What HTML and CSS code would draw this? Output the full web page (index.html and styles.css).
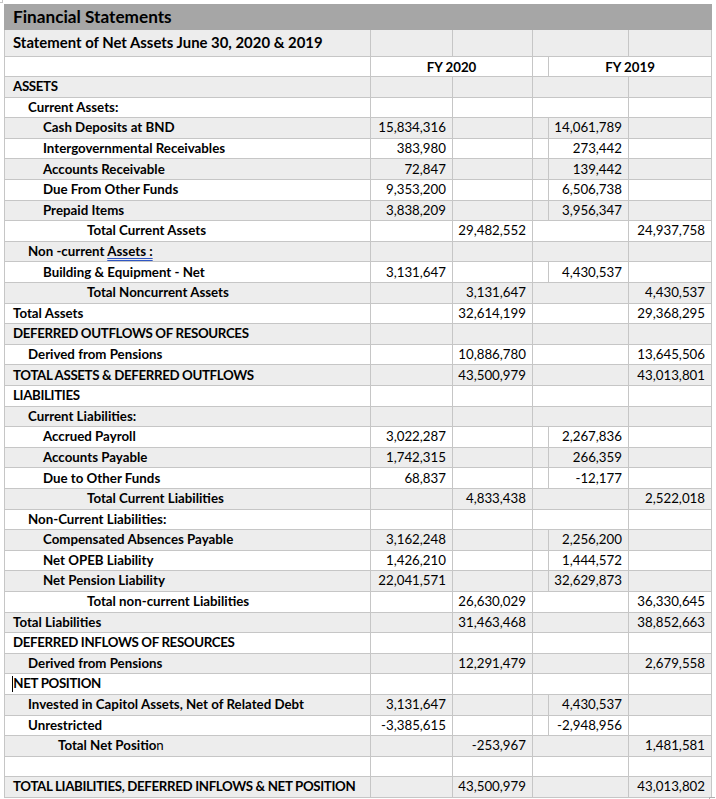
FILE: index.html
```html
<!DOCTYPE html>
<html lang="en">
<head>
<meta charset="utf-8">
<title>Financial Statements</title>
<link rel="stylesheet" href="styles.css">
</head>
<body>
<span class="mark mark-tl"></span>
<div class="sheet">
<table class="fs">
  <colgroup>
    <col class="c-lbl"><col class="c-a"><col class="c-b"><col class="c-gap"><col class="c-c"><col class="c-d">
  </colgroup>
  <tbody>
    <tr class="title"><td colspan="6">Financial Statements</td></tr>
    <tr class="sub"><td class="lbl l0">Statement of Net Assets June 30, 2020 &amp; 2019</td><td></td><td></td><td colspan="2"></td><td></td></tr>
    <tr class="r"><td></td><td colspan="2" class="fy">FY 2020</td><td></td><td colspan="2" class="fy">FY 2019</td></tr>
    <tr class="r"><td class="lbl l0 caps">ASSETS</td><td></td><td></td><td colspan="2"></td><td></td></tr>
    <tr class="r"><td class="lbl l1">Current Assets:</td><td></td><td></td><td colspan="2"></td><td></td></tr>
    <tr class="r"><td class="lbl l2">Cash Deposits at BND</td><td class="num">15,834,316</td><td></td><td></td><td class="num">14,061,789</td><td></td></tr>
    <tr class="r"><td class="lbl l2">Intergovernmental Receivables</td><td class="num">383,980</td><td></td><td></td><td class="num">273,442</td><td></td></tr>
    <tr class="r"><td class="lbl l2">Accounts Receivable</td><td class="num">72,847</td><td></td><td></td><td class="num">139,442</td><td></td></tr>
    <tr class="r"><td class="lbl l2">Due From Other Funds</td><td class="num">9,353,200</td><td></td><td></td><td class="num">6,506,738</td><td></td></tr>
    <tr class="r"><td class="lbl l2">Prepaid Items</td><td class="num">3,838,209</td><td></td><td></td><td class="num">3,956,347</td><td></td></tr>
    <tr class="r"><td class="lbl lt">Total Current Assets</td><td></td><td class="num">29,482,552</td><td colspan="2"></td><td class="num">24,937,758</td></tr>
    <tr class="r"><td class="lbl l1">Non -current <span class="gram">Assets :</span></td><td></td><td></td><td colspan="2"></td><td></td></tr>
    <tr class="r"><td class="lbl l2">Building &amp; Equipment - Net</td><td class="num">3,131,647</td><td></td><td></td><td class="num">4,430,537</td><td></td></tr>
    <tr class="r"><td class="lbl lt">Total Noncurrent Assets</td><td></td><td class="num">3,131,647</td><td colspan="2"></td><td class="num">4,430,537</td></tr>
    <tr class="r"><td class="lbl l0">Total Assets</td><td></td><td class="num">32,614,199</td><td colspan="2"></td><td class="num">29,368,295</td></tr>
    <tr class="r"><td class="lbl l0 caps">DEFERRED OUTFLOWS OF RESOURCES</td><td></td><td></td><td colspan="2"></td><td></td></tr>
    <tr class="r"><td class="lbl l1">Derived from Pensions</td><td></td><td class="num">10,886,780</td><td colspan="2"></td><td class="num">13,645,506</td></tr>
    <tr class="r"><td class="lbl l0 caps">TOTAL ASSETS &amp; DEFERRED OUTFLOWS</td><td></td><td class="num">43,500,979</td><td colspan="2"></td><td class="num">43,013,801</td></tr>
    <tr class="r"><td class="lbl l0 caps">LIABILITIES</td><td></td><td></td><td colspan="2"></td><td></td></tr>
    <tr class="r"><td class="lbl l1">Current Liabilities:</td><td></td><td></td><td colspan="2"></td><td></td></tr>
    <tr class="r"><td class="lbl l2">Accrued Payroll</td><td class="num">3,022,287</td><td></td><td></td><td class="num">2,267,836</td><td></td></tr>
    <tr class="r"><td class="lbl l2">Accounts Payable</td><td class="num">1,742,315</td><td></td><td></td><td class="num">266,359</td><td></td></tr>
    <tr class="r"><td class="lbl l2">Due to Other Funds</td><td class="num">68,837</td><td></td><td></td><td class="num">-12,177</td><td></td></tr>
    <tr class="r"><td class="lbl lt">Total Current Liabilities</td><td></td><td class="num">4,833,438</td><td colspan="2"></td><td class="num">2,522,018</td></tr>
    <tr class="r"><td class="lbl l1">Non-Current Liabilities:</td><td></td><td></td><td colspan="2"></td><td></td></tr>
    <tr class="r"><td class="lbl l2">Compensated Absences Payable</td><td class="num">3,162,248</td><td></td><td></td><td class="num">2,256,200</td><td></td></tr>
    <tr class="r"><td class="lbl l2">Net OPEB Liability</td><td class="num">1,426,210</td><td></td><td></td><td class="num">1,444,572</td><td></td></tr>
    <tr class="r"><td class="lbl l2">Net Pension Liability</td><td class="num">22,041,571</td><td></td><td></td><td class="num">32,629,873</td><td></td></tr>
    <tr class="r"><td class="lbl lt">Total non-current Liabilities</td><td></td><td class="num">26,630,029</td><td colspan="2"></td><td class="num">36,330,645</td></tr>
    <tr class="r"><td class="lbl l0">Total Liabilities</td><td></td><td class="num">31,463,468</td><td colspan="2"></td><td class="num">38,852,663</td></tr>
    <tr class="r"><td class="lbl l0 caps">DEFERRED INFLOWS OF RESOURCES</td><td></td><td></td><td colspan="2"></td><td></td></tr>
    <tr class="r"><td class="lbl l1">Derived from Pensions</td><td></td><td class="num">12,291,479</td><td colspan="2"></td><td class="num">2,679,558</td></tr>
    <tr class="r"><td class="lbl l0 caps"><span class="caret"></span>NET POSITION</td><td></td><td></td><td colspan="2"></td><td></td></tr>
    <tr class="r"><td class="lbl l1">Invested in Capitol Assets, Net of Related Debt</td><td class="num">3,131,647</td><td></td><td></td><td class="num">4,430,537</td><td></td></tr>
    <tr class="r"><td class="lbl l1">Unrestricted</td><td class="num">-3,385,615</td><td></td><td></td><td class="num">-2,948,956</td><td></td></tr>
    <tr class="r"><td class="lbl lnp">Total Net Positio<span class="thin">n</span></td><td></td><td class="num">-253,967</td><td colspan="2"></td><td class="num">1,481,581</td></tr>
    <tr class="r"><td></td><td></td><td></td><td colspan="2"></td><td></td></tr>
    <tr class="r"><td class="lbl l0 caps">TOTAL LIABILITIES, DEFERRED INFLOWS &amp; NET POSITION</td><td></td><td class="num">43,500,979</td><td colspan="2"></td><td class="num">43,013,802</td></tr>
  </tbody>
</table>
</div>
<span class="mark mark-br"></span>
</body>
</html>
```
FILE: styles.css
```css
html, body {
  margin: 0;
  padding: 0;
  background: #ffffff;
}
body {
  position: relative;
  width: 716px;
  height: 799px;
  overflow: hidden;
  font-family: Lato, "Open Sans", "Liberation Sans", sans-serif;
  color: #000;
}
.sheet {
  padding: 4px 0 0 4px;
}
.fs {
  border-collapse: collapse;
  table-layout: fixed;
  width: 707px;
  font-size: 13.3px;
  border: 1px solid #c6c6c6;
}
.c-lbl { width: 366px; }
.c-a { width: 82px; }
.c-b { width: 80px; }
.c-gap { width: 16px; }
.c-c { width: 80px; }
.c-d { width: 83px; }

.fs td {
  border: 1px solid #c6c6c6;
  padding: 0;
  white-space: nowrap;
  overflow: hidden;
  vertical-align: middle;
  line-height: 1;
}
.title td {
  background: #a6a6a6;
  height: 24px;
  font-weight: 700;
  font-size: 17.2px;
  padding-left: 8px;
  border-color: #a6a6a6;
}
.sub td {
  height: 25.5px;
  background: #ededed;
}
.sub .lbl { font-size: 14.9px; }
.r { height: 20.6px; }
.r:nth-child(even) td { background: #ededed; }
.r:nth-child(odd) td { background: #ffffff; }

.lbl { font-weight: 700; }
.caps { letter-spacing: -0.35px; }
.l0 { padding-left: 8px !important; }
.l1 { padding-left: 23px !important; }
.l2 { padding-left: 38px !important; }
.lnp { padding-left: 53px !important; }
.lt { padding-left: 82px !important; }
.num {
  text-align: right;
  padding-right: 6px !important;
}
.fy {
  text-align: center;
  font-weight: 700;
  padding-top: 2px !important;
}
.gram {
  text-decoration: underline double #2f57c4;
  text-underline-offset: 2px;
}
.thin { font-weight: 400; }
.caret {
  display: inline-block;
  width: 1px;
  height: 16px;
  background: #000;
  vertical-align: -4px;
  margin-left: -1px;
  margin-right: 0.35px;
}
.mark {
  position: absolute;
  width: 5px;
  height: 5px;
}
.mark-tl {
  left: 0;
  top: 0;
  border-right: 1px solid #c6c6c6;
  border-bottom: 1px solid #c6c6c6;
  width: 2px;
  height: 2px;
}
.mark-br {
  left: 709px;
  top: 797px;
  border-left: 1px solid #b0b0b0;
  border-top: 1px solid #b0b0b0;
}
```
